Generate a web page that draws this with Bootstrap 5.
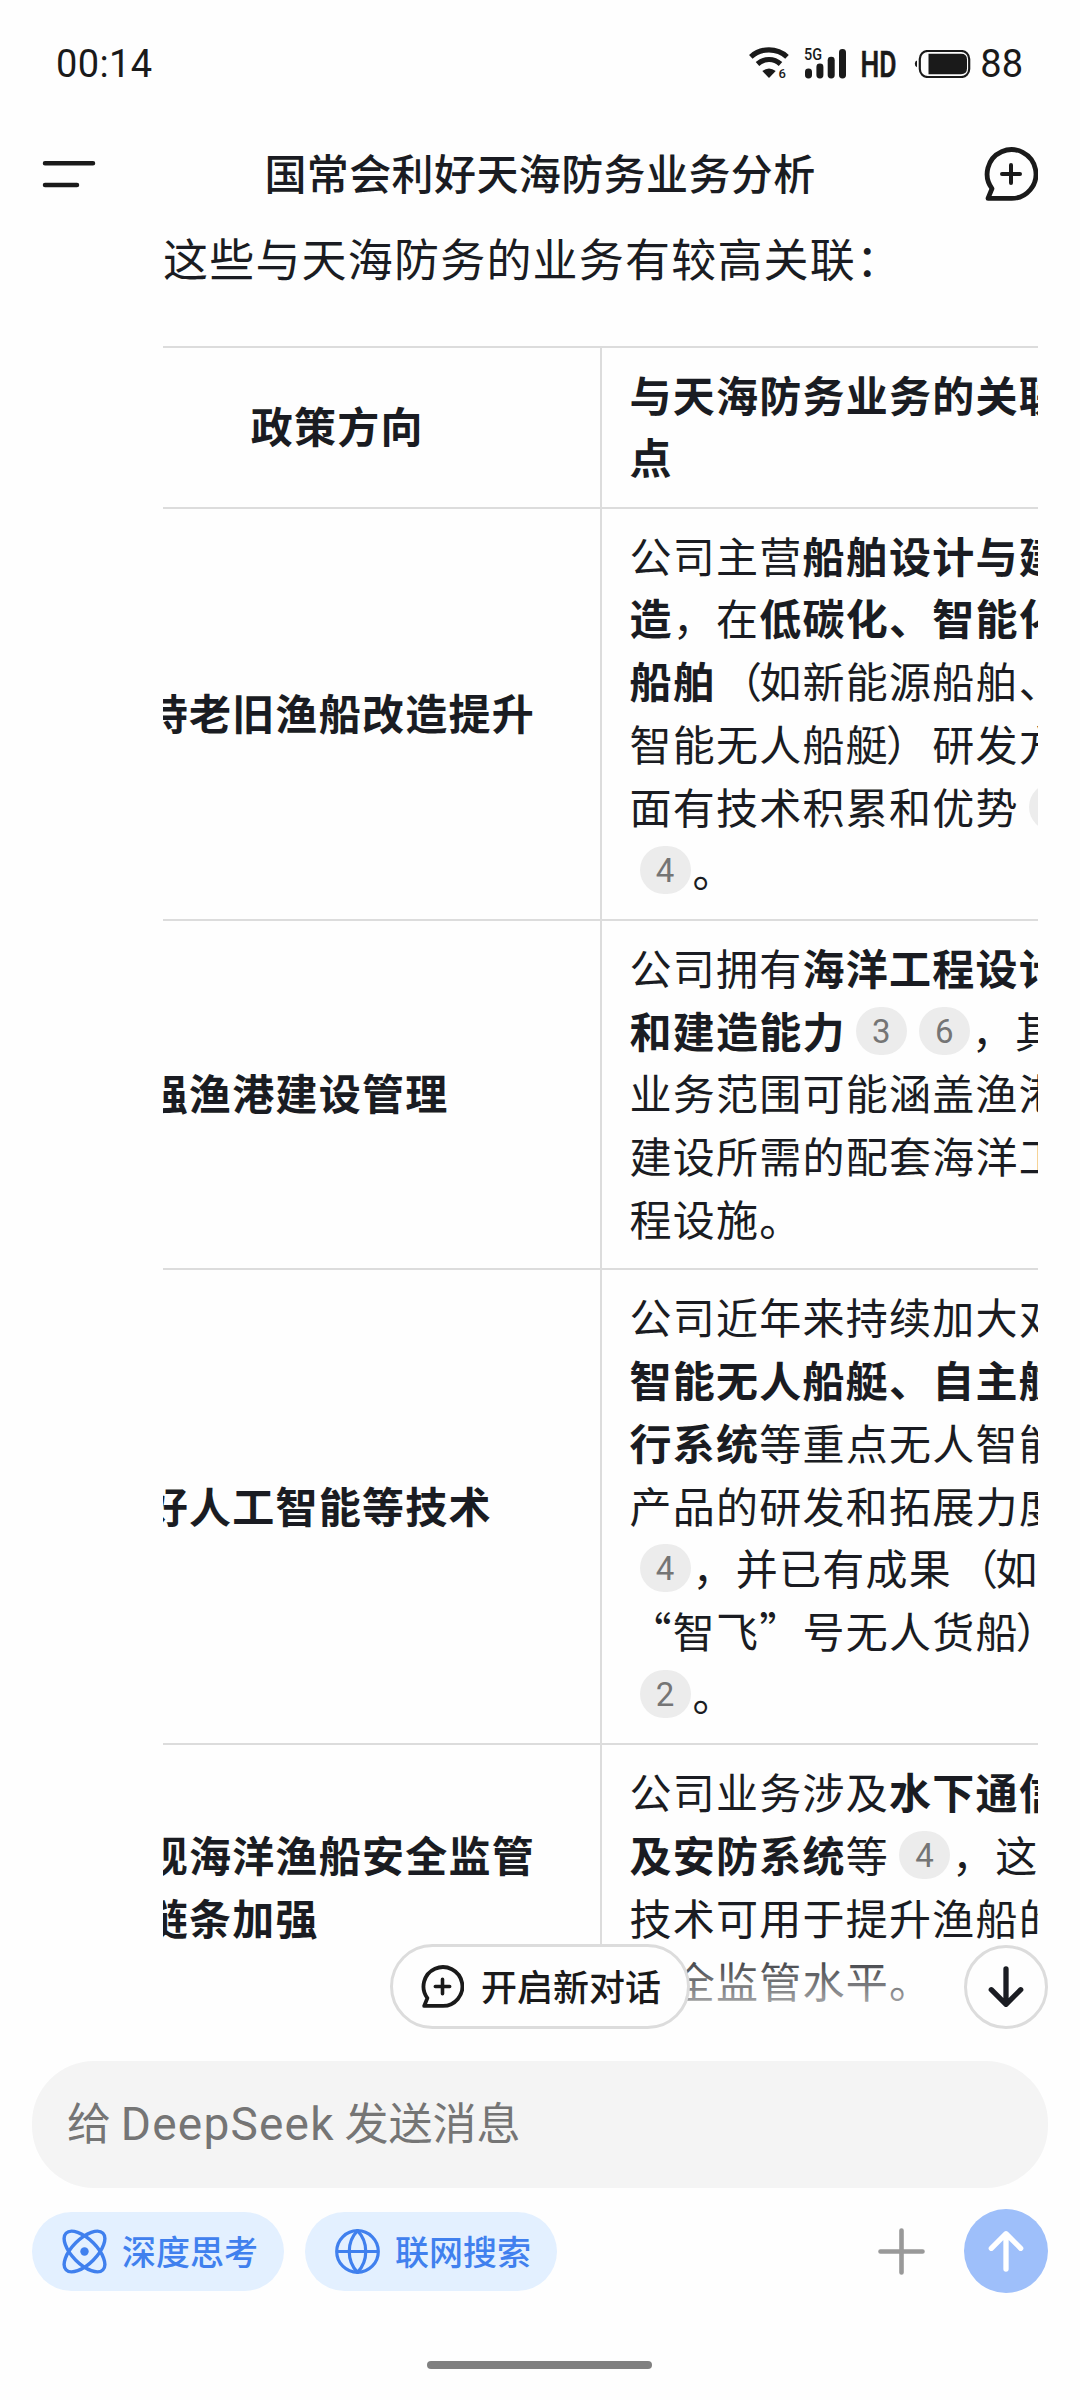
<!DOCTYPE html>
<html lang="zh-CN">
<head>
<meta charset="utf-8">
<meta name="viewport" content="width=device-width, initial-scale=1">
<title>国常会利好天海防务业务分析</title>
<link href="https://cdn.jsdelivr.net/npm/bootstrap@5.3.0/dist/css/bootstrap.min.css" rel="stylesheet">
<style>
  html, body { width: 1080px; height: 2400px; overflow: hidden; }
  body { font-family: Roboto, "Noto Sans CJK SC", sans-serif; color: #1a1c22; background: #fefefe; }
  svg { display: block; flex: none; }
  .cjk { font-family: "Noto Sans CJK SC", sans-serif; }

  .status-bar { height: 126px; padding: 1px 57px 0 56px; color: #1a1a1a; font-size: 38px; line-height: 40px; }
  .clock { letter-spacing: .4px; }
  .battery { margin: 0 9px 0 17px; }
  .top-bar { height: 96px; padding: 0 42px; }
  .top-title { font-size: 42px; letter-spacing: .4px; font-weight: 500; line-height: 60px; padding-bottom: 4px; }

  .chat { height: 1812px; padding: 0 42px 0 163px; }
  .intro { font-size: 45px; letter-spacing: 1.2px; line-height: 70px; height: 124px; padding-top: 1px; white-space: nowrap; }
  .policy { width: 1080px; margin: 0 0 0 -91px; table-layout: fixed; font-size: 42px; letter-spacing: 1.25px; line-height: 62.8px; color: inherit; border-collapse: collapse; }
  .policy th, .policy td { border: 2px solid #dcdcdc; padding: 14.7px 28px 18.7px 27.5px; white-space: nowrap; vertical-align: middle; background: none; color: inherit; }
  .policy th:first-child { width: 528px; padding-left: 28.5px; }
  .paren-l, .paren-r { display: inline-block; width: 43.25px; text-indent: 4px; }
  .paren-r { text-indent: -3px; }
  .cite { display: inline-block; width: 51px; height: 48px; border-radius: 24px; background: #ececec; color: #757575; font-family: Roboto, sans-serif; font-size: 33px; line-height: 50px; letter-spacing: 0; text-align: center; vertical-align: 5px; margin: -6px 2px -6px 10px; }
  .fade-out { left: 0; right: 0; bottom: 0; height: 94px; background: linear-gradient(rgba(254,254,254,0), rgba(254,254,254,.27) 32%, rgba(254,254,254,.62) 70%, #fefefe 95%); }

  .float-bar { left: 0; right: 0; top: 1944px; padding: 0 32px 0 390px; }
  .new-chat { width: 300px; height: 85px; border: 3px solid #dcdcdc; border-radius: 43px; background: #fefefe; font-size: 36px; font-weight: 500; line-height: 50px; color: #1a1a1a; padding-left: 28px; gap: 17px; }
  .new-chat span { padding-bottom: 4px; }
  .to-bottom { width: 84px; height: 84px; border: 3px solid #dcdcdc; background: #fefefe; margin-top: 1px; }

  .composer { padding: 27px 32px 0; }
  .prompt { height: 127px; border-radius: 62px; background: #f4f4f4; color: #757575; font-size: 44px; line-height: 60px; padding: 0 35px 4px; }
  .prompt .latin { font-family: Roboto, sans-serif; font-size: 46px; letter-spacing: 1.2px; }
  .chips { margin-top: 21px; gap: 21px; height: 84px; }
  .chip { width: 252px; height: 79px; border-radius: 40px; background: #e3f0ff; color: #4080ee; font-size: 34px; font-weight: 500; line-height: 46px; padding-left: 30px; gap: 15px; }
  .send { width: 84px; height: 84px; background: #9ebffa; margin-left: 39px; }
  .home-bar { width: 225px; height: 8px; border-radius: 4px; background: #808080; margin: 68px 0 0 395px; }
</style>
<script src="https://cdn.jsdelivr.net/npm/bootstrap@5.3.0/dist/js/bootstrap.bundle.min.js"></script>
</head>
<body class="d-flex flex-column position-relative">

<div class="status-bar d-flex align-items-center justify-content-between flex-shrink-0">
  <span class="clock">00:14</span>
  <div class="d-flex align-items-center">
    <svg width="148" height="38" viewBox="0 0 148 38">
      <g fill="none" stroke="#1a1a1a" stroke-width="5.2">
        <path d="M1.800 11.800C12 2.500 28 2.500 38 11.800"/>
        <path d="M8.500 19C15 13 25 13 31.500 19"/>
      </g>
      <path d="M13.300 26Q20 21 26.700 26L20 33Z" fill="#1a1a1a"/>
      <text x="29.500" y="32.800" font-family="Roboto" font-size="13" font-weight="500" fill="#1a1a1a">6</text>
      <text x="55" y="15" font-family="Roboto" font-size="16" font-weight="500" fill="#1a1a1a" textLength="18" lengthAdjust="spacingAndGlyphs">5G</text>
      <g fill="#1a1a1a">
        <rect x="56" y="23.500" width="7" height="10" rx="3.400"/>
        <rect x="67.400" y="18.500" width="7" height="15" rx="3.400"/>
        <rect x="78.700" y="11.800" width="7" height="21.700" rx="3.400"/>
        <rect x="90" y="4" width="7" height="29.500" rx="3.400"/>
      </g>
      <text x="111.500" y="31.500" font-family="Roboto" font-size="36" font-weight="500" fill="#1a1a1a" stroke="#1a1a1a" stroke-width=".7" textLength="36" lengthAdjust="spacingAndGlyphs">HD</text>
    </svg>
    <svg class="battery" width="57" height="28" viewBox="0 0 57 28">
      <path d="M3 10.500Q.8 11 .8 13.800T3 17.200Z" fill="#1a1a1a"/>
      <rect x="5.800" y="1" width="49.400" height="26" rx="8" fill="none" stroke="#1a1a1a" stroke-width="2.200"/>
      <path d="M14.500 3.800H47Q53 3.800 53 9.500V18.500Q53 24.200 47 24.200H14.500Z" fill="#1a1a1a"/>
    </svg>
    <span>88</span>
  </div>
</div>

<header class="top-bar d-flex align-items-center justify-content-between flex-shrink-0">
  <svg width="54" height="54" viewBox="0 0 54 54" stroke="#1a1a1a" stroke-width="4.500" stroke-linecap="round"><path d="M3 16.200H51M3 38H35"/></svg>
  <h1 class="top-title cjk m-0">国常会利好天海防务业务分析</h1>
  <svg width="54" height="54" viewBox="0 0 54 54" fill="none" stroke="#1a1a1a" stroke-linecap="round" stroke-linejoin="round">
    <path d="M4 51.400L8 41.600A24.400 24.400 0 1 1 27 51.400Z" stroke-width="4.800"/>
    <path d="M27 18V36M18 27H36" stroke-width="4"/>
  </svg>
</header>

<main class="chat cjk position-relative overflow-hidden flex-shrink-0">
  <p class="intro m-0">这些与天海防务的业务有较高关联：</p>
  <div class="overflow-hidden">
    <table class="policy">
      <thead>
        <tr><th class="text-center">政策方向</th><th>与天海防务业务的关联<br>点</th></tr>
      </thead>
      <tbody>
        <tr>
          <th>支持老旧渔船改造提升</th>
          <td>公司主营<b>船舶设计与建</b><br><b>造</b>，在<b>低碳化、智能化</b><br><b>船舶</b><span class="paren-l">（</span>如新能源船舶、<br>智能无人船艇<span class="paren-r">）</span>研发方<br>面有技术积累和优势<span class="cite">1</span><br><span class="cite">4</span>。</td>
        </tr>
        <tr>
          <th>加强渔港建设管理</th>
          <td>公司拥有<b>海洋工程设计</b><br><b>和建造能力</b><span class="cite">3</span><span class="cite">6</span>，其<br>业务范围可能涵盖渔港<br>建设所需的配套海洋工<br>程设施。</td>
        </tr>
        <tr>
          <th>用好人工智能等技术</th>
          <td>公司近年来持续加大对<br><b>智能无人船艇、自主航</b><br><b>行系统</b>等重点无人智能<br>产品的研发和拓展力度<br><span class="cite">4</span>，并已有成果<span class="paren-l">（</span>如<br>“智飞”号无人货船<span class="paren-r">）</span><br><span class="cite">2</span>。</td>
        </tr>
        <tr>
          <th>实现海洋渔船安全监管<br>全链条加强</th>
          <td>公司业务涉及<b>水下通信</b><br><b>及安防系统</b>等<span class="cite">4</span>，这<br>技术可用于提升渔船的<br>安全监管水平。</td>
        </tr>
      </tbody>
    </table>
  </div>
  <div class="fade-out position-absolute"></div>
</main>

<div class="float-bar position-absolute d-flex justify-content-between">
  <div class="new-chat cjk d-flex align-items-center">
    <svg width="43" height="43" viewBox="0 0 54 54" fill="none" stroke="#1a1a1a" stroke-linecap="round" stroke-linejoin="round">
      <path d="M4 51.400L8 41.600A24.400 24.400 0 1 1 27 51.400Z" stroke-width="4.800"/>
      <path d="M27 18V36M18 27H36" stroke-width="4.500"/>
    </svg>
    <span>开启新对话</span>
  </div>
  <div class="to-bottom rounded-circle d-flex align-items-center justify-content-center">
    <svg width="36" height="42" viewBox="0 0 36 42" fill="none" stroke="#1a1c22" stroke-width="5.300" stroke-linecap="round" stroke-linejoin="round"><path d="M18 3V38M3.300 23.700L18 38.300L32.700 23.700"/></svg>
  </div>
</div>

<footer class="composer flex-shrink-0">
  <div class="prompt cjk d-flex align-items-center"><span>给 <span class="latin">DeepSeek</span> 发送消息</span></div>
  <div class="chips d-flex align-items-center">
    <div class="chip cjk d-flex align-items-center">
      <svg width="45" height="45" viewBox="0 0 45 45" fill="none" stroke="#4080ee" stroke-width="3.400">
        <ellipse cx="22.500" cy="22.500" rx="26" ry="12.300" transform="rotate(45 22.500 22.500)"/>
        <ellipse cx="22.500" cy="22.500" rx="26" ry="12.300" transform="rotate(-45 22.500 22.500)"/>
        <circle cx="22.500" cy="22.500" r="4.200" fill="#4080ee" stroke="none"/>
      </svg>
      <span>深度思考</span>
    </div>
    <div class="chip cjk d-flex align-items-center">
      <svg width="45" height="45" viewBox="0 0 45 45" fill="none" stroke="#4080ee" stroke-width="3.200">
        <circle cx="22.500" cy="22.500" r="20.800"/>
        <path d="M2 22.500H43M22.500 1.700C11.500 13 11.500 32 22.500 43.300C33.500 32 33.500 13 22.500 1.700Z"/>
      </svg>
      <span>联网搜索</span>
    </div>
    <div class="d-flex align-items-center ms-auto">
      <svg width="47" height="47" viewBox="0 0 47 47" stroke="#999" stroke-width="4.600" stroke-linecap="round"><path d="M23.500 2.500V44.500M2.500 23.500H44.500"/></svg>
      <div class="send rounded-circle d-flex align-items-center justify-content-center">
        <svg width="36" height="42" viewBox="0 0 36 42" fill="none" stroke="#fff" stroke-width="5.300" stroke-linecap="round" stroke-linejoin="round"><path d="M18 39V4M3.300 18.300L18 3.700L32.700 18.300"/></svg>
      </div>
    </div>
  </div>
  <div class="home-bar"></div>
</footer>
</body>
</html>
